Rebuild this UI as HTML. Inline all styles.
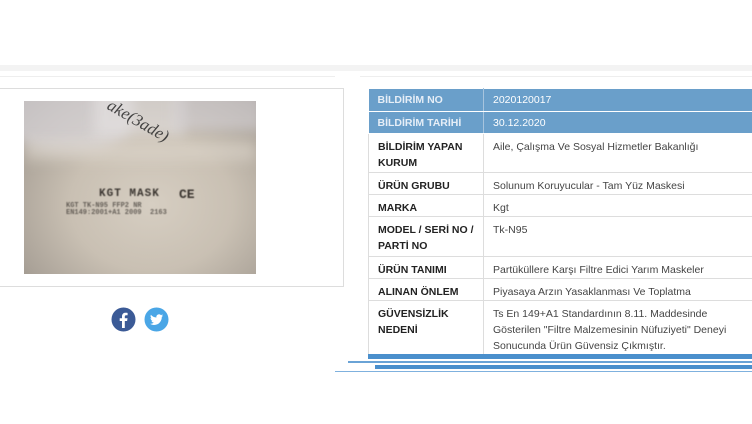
<!DOCTYPE html>
<html><head><meta charset="utf-8"><style>
*{margin:0;padding:0;box-sizing:border-box}
body{width:752px;height:424px;background:#fff;position:relative;overflow:hidden;font-family:"Liberation Sans",Arial,sans-serif}
.band{position:absolute;left:0;top:65px;width:752px;height:6px;background:#f3f3f3}
.line1{position:absolute;left:0;top:76px;width:335px;height:1px;background:#eee}
.line2{position:absolute;left:360px;top:76px;width:392px;height:1px;background:#eee}
.lbox{position:absolute;left:-2px;top:88px;width:346px;height:199px;border:1px solid #ddd;background:#fff}
.img{position:absolute;left:24px;top:101px;width:232px;height:173px;overflow:hidden;
background:radial-gradient(ellipse at 55% 60%,#d6cec2 0%,#c9c0b3 45%,#aaa298 80%,#918a83 100%)}
.img .t{position:absolute;font-family:"Liberation Mono",monospace;color:#3a3530;font-weight:bold;filter:blur(.4px)}
.s{position:absolute;filter:blur(6px)}
table{position:absolute;left:368px;top:88px;width:400px;border-collapse:collapse;font-size:10.5px}
td{border:1px solid #ddd;padding:5px 9px 0 9px;vertical-align:top;color:#444;line-height:16px}
td.k{width:115px;font-weight:bold;color:#222}
tr.h td{background:#6a9fca;color:#fff;border-color:#fff;border-left:none;padding-top:3px}
tr.h td.k{color:#e6eef7;border-right:1px solid #a7c4de}
.b{position:absolute;background:#4a8fcc}
</style></head><body>
<div class="band"></div><div class="line1"></div><div class="line2"></div>
<div class="lbox"></div>
<div class="img">
<div class="s" style="left:-20px;top:-30px;width:130px;height:80px;background:#dcd9dd;border-radius:40%;opacity:.7"></div>
<div class="s" style="left:70px;top:-25px;width:90px;height:60px;background:#e6e3e3;opacity:.6"></div>
<div class="s" style="left:150px;top:-10px;width:90px;height:40px;background:#d6d3d8;opacity:.6"></div>
<div class="s" style="left:0px;top:40px;width:232px;height:20px;background:#e0d9cf;opacity:.5"></div>
<div style="position:absolute;left:80px;top:10px;font:italic 17px 'Liberation Serif',serif;color:#2a2a2a;transform:rotate(30deg);opacity:.85">ake(3ade)</div>
<div class="t" style="left:75px;top:87px;font-size:11px;letter-spacing:1px">KGT MASK</div>
<div class="t" style="left:155px;top:86px;font-size:13px">CE</div>
<div class="t" style="left:42px;top:101px;font-size:7px;opacity:.7">KGT TK-N95 FFP2 NR</div>
<div class="t" style="left:42px;top:108px;font-size:7px;opacity:.7">EN149:2001+A1 2009 &nbsp;2163</div>
</div>
<svg style="position:absolute;left:111px;top:307px" width="25" height="25" viewBox="0 0 25 25"><circle cx="12.5" cy="12.5" r="12" fill="#3b5a96"/><path d="M13.8 21v-7h2.3l.4-2.7h-2.7V9.6c0-.8.3-1.3 1.4-1.3h1.4V5.9c-.3 0-1.1-.1-2.1-.1-2.1 0-3.5 1.3-3.5 3.6v1.9H8.7V14h2.3v7z" fill="#fff"/></svg>
<svg style="position:absolute;left:144px;top:307px" width="25" height="25" viewBox="0 0 25 25"><circle cx="12.5" cy="12.5" r="12" fill="#4aa6e6"/><path d="M19 8.5c-.5.2-1 .4-1.5.4.6-.3 1-.9 1.2-1.5-.5.3-1.100.5-1.700.7a2.7 2.7 0 0 0-4.600 2.400c-2.200-.1-4.200-1.200-5.500-2.800-.7 1.200-.3 2.800.8 3.600-.4 0-.8-.1-1.200-.3 0 1.300.9 2.400 2.100 2.700-.4.1-.8.1-1.200 0 .3 1.100 1.300 1.800 2.500 1.900A5.400 5.400 0 0 1 6 16.800c1.200.8 2.600 1.200 4.100 1.200 5 0 7.800-4.200 7.700-8.100.5-.4 1-.9 1.200-1.400z" fill="#fff"/></svg>
<table>
<tr class="h" style="height:23px"><td class="k">BİLDİRİM NO</td><td>2020120017</td></tr>
<tr class="h" style="height:22px"><td class="k">BİLDİRİM TARİHİ</td><td>30.12.2020</td></tr>
<tr style="height:39px"><td class="k">BİLDİRİM YAPAN KURUM</td><td>Aile, Çalışma Ve Sosyal Hizmetler Bakanlığı</td></tr>
<tr style="height:22px"><td class="k">ÜRÜN GRUBU</td><td>Solunum Koruyucular - Tam Yüz Maskesi</td></tr>
<tr style="height:22px"><td class="k">MARKA</td><td>Kgt</td></tr>
<tr style="height:40px"><td class="k">MODEL / SERİ NO / PARTİ NO</td><td>Tk-N95</td></tr>
<tr style="height:22px"><td class="k">ÜRÜN TANIMI</td><td>Partüküllere Karşı Filtre Edici Yarım Maskeler</td></tr>
<tr style="height:22px"><td class="k">ALINAN ÖNLEM</td><td>Piyasaya Arzın Yasaklanması Ve Toplatma</td></tr>
<tr style="height:55px"><td class="k">GÜVENSİZLİK NEDENİ</td><td>Ts En 149+A1 Standardının 8.11. Maddesinde Gösterilen "Filtre Malzemesinin Nüfuziyeti" Deneyi Sonucunda Ürün Güvensiz Çıkmıştır.</td></tr>
</table>
<div class="b" style="left:368px;top:354px;width:384px;height:5px"></div>
<div class="b" style="left:348px;top:361px;width:404px;height:2px;background:#6aa3d6"></div>
<div class="b" style="left:375px;top:365px;width:377px;height:4px"></div>
<div class="b" style="left:335px;top:371px;width:417px;height:1px;background:#7fb1de"></div>
</body></html>
